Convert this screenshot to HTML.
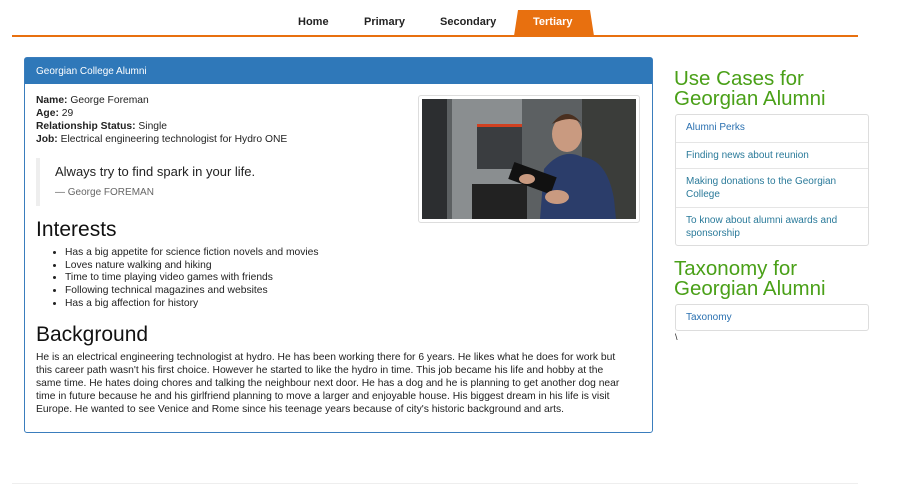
<!DOCTYPE html>
<html><head><style>
*{margin:0;padding:0;box-sizing:border-box}
body{width:900px;height:500px;background:#fff;font-family:"Liberation Sans",sans-serif;color:#222;position:relative;overflow:hidden}
.abs{position:absolute}
.nav a{position:absolute;top:16px;font-size:11px;font-weight:bold;color:#222}
.tab{left:514px;top:10px;width:80px;height:26px;background:#e8700f;border-radius:4px 4px 0 0;clip-path:polygon(5% 0,95% 0,100% 100%,0 100%)}
.line{left:12px;top:35px;width:846px;height:2px;background:#e8700f}
.panel{left:24px;top:57px;width:629px;height:376px;border:1px solid #3a7dbd;border-radius:3px}
.ph{left:0;top:0;width:627px;height:26px;background:#2f78b9;color:#fff;font-size:10px;padding:8px 11px}
.info{left:11px;top:36px;font-size:10.3px;line-height:13px}
.quote{left:11px;top:100px;border-left:4px solid #eee;padding:6px 0 0 15px;height:48px;width:300px}
.quote p{font-size:13px}
.quote small{display:block;font-size:10px;color:#666;margin-top:8px}
h2{position:absolute;left:11px;font-weight:normal;font-size:21px;color:#111}
ul{position:absolute;left:40px;top:189px;font-size:10.3px;line-height:12.7px}
.bg{left:11px;top:293px;width:592px;font-size:10.3px;line-height:13px}
.img{left:393px;top:37px;width:222px;height:128px;border:1px solid #ddd;border-radius:3px;padding:3px;background:#fff}
.side h3{position:absolute;left:674px;font-size:20.5px;color:#4aa018;font-weight:normal;line-height:20px}
.list{position:absolute;left:675px;width:194px;border:1px solid #ddd;border-radius:3px;font-size:10px;color:#2a7a9a}
.list div{border-top:1px solid #e5e5e5;padding:6px 10px 0;line-height:13px}
.list div:first-child{border-top:none}
</style></head><body>
<div class="nav">
<div class="abs tab"></div>
<a style="left:298px">Home</a>
<a style="left:364px">Primary</a>
<a style="left:440px">Secondary</a>
<a style="left:533px;color:#fff">Tertiary</a>
</div>
<div class="abs line"></div>
<div class="abs panel">
<div class="abs ph">Georgian College Alumni</div>
<div class="abs info"><b>Name:</b> George Foreman<br><b>Age:</b> 29<br><b>Relationship Status:</b> Single<br><b>Job:</b> Electrical engineering technologist for Hydro ONE</div>
<div class="abs quote"><p>Always try to find spark in your life.</p><small>— George FOREMAN</small></div>
<h2 style="top:160px">Interests</h2>
<ul><li>Has a big appetite for science fiction novels and movies</li><li>Loves nature walking and hiking</li><li>Time to time playing video games with friends</li><li>Following technical magazines and websites</li><li>Has a big affection for history</li></ul>
<h2 style="top:265px">Background</h2>
<div class="abs bg">He is an electrical engineering technologist at hydro. He has been working there for 6 years. He likes what he does for work but this career path wasn't his first choice. However he started to like the hydro in time. This job became his life and hobby at the same time. He hates doing chores and talking the neighbour next door. He has a dog and he is planning to get another dog near time in future because he and his girlfriend planning to move a larger and enjoyable house. His biggest dream in his life is visit Europe. He wanted to see Venice and Rome since his teenage years because of city's historic background and arts.</div>
<div class="abs img"><svg width="214" height="120" viewBox="0 0 214 120">
<rect width="214" height="120" fill="#5c6062"/>
<rect x="0" y="0" width="25" height="120" fill="#2c2e30"/>
<rect x="30" y="0" width="70" height="120" fill="#8a8e90"/>
<rect x="55" y="25" width="45" height="45" fill="#3a3d40"/>
<rect x="55" y="25" width="45" height="3" fill="#d04020"/>
<rect x="50" y="85" width="55" height="35" fill="#222"/>
<rect x="160" y="0" width="54" height="120" fill="#3b3d3a"/>
<path d="M118 120 L122 70 Q140 48 160 58 Q185 60 192 100 L194 120Z" fill="#2b3d6a"/>
<ellipse cx="145" cy="35" rx="15" ry="18" fill="#c99a80"/>
<path d="M130 25 Q145 5 160 25 Q150 15 130 25Z" fill="#4a3020"/>
<rect x="88" y="70" width="45" height="18" fill="#111" transform="rotate(20 110 79)"/>
<ellipse cx="105" cy="80" rx="8" ry="5" fill="#c99a80"/>
<ellipse cx="135" cy="98" rx="12" ry="7" fill="#c99a80"/>
</svg></div>
</div>
<div class="side">
<h3 style="top:69px">Use Cases for<br>Georgian Alumni</h3>
<div class="list" style="top:114px;height:132px">
<div style="height:27px;color:#2a70b0">Alumni Perks</div>
<div style="height:26px">Finding news about reunion</div>
<div style="height:39px">Making donations to the Georgian College</div>
<div style="height:38px">To know about alumni awards and sponsorship</div>
</div>
<h3 style="top:259px">Taxonomy for<br>Georgian Alumni</h3>
<div class="list" style="top:304px;height:27px"><div style="color:#2a70b0">Taxonomy</div></div>
<div class="abs" style="left:675px;top:332px;font-size:9px">\</div>
</div>
<div class="abs" style="left:12px;top:483px;width:846px;height:1px;background:#eee"></div>
</body></html>
